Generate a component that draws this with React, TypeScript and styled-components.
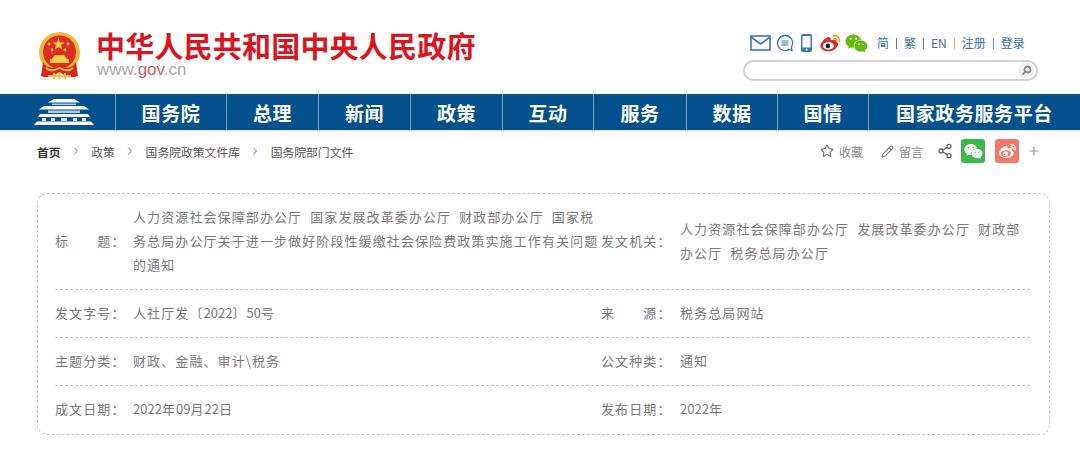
import React from "react";
import styled, { createGlobalStyle } from "styled-components";
import { FaWeibo, FaWeixin } from "react-icons/fa";
import { ChevronRight, Pencil, Plus, Share2, Star } from "lucide-react";

const GlobalStyle = createGlobalStyle`
    html, body {
        margin: 0;
        padding: 0;
        background: #fff;
        font-family: "Noto Sans CJK SC", "Liberation Sans", sans-serif;
    }
`;

const Page = styled.div`
    width: 1080px;
    height: 455px;
    overflow: hidden;
`;

const Header = styled.header`
    height: 94px;
    display: flex;
    justify-content: space-between;
    padding: 0 42px 0 37px;
    box-sizing: border-box;
`;

const Brand = styled.div`
    display: flex;
    gap: 14px;
    padding-top: 32px;
`;

const BrandText = styled.div`
    display: flex;
    flex-direction: column;
    margin-top: -2px;
`;

const SiteTitle = styled.div`
    font-size: 29px;
    line-height: 30px;
    font-weight: 700;
    letter-spacing: 0.2px;
    color: #d8161f;
    white-space: nowrap;
`;

const SiteUrl = styled.div`
    font-family: "Liberation Sans", sans-serif;
    font-size: 17px;
    line-height: 17px;
    margin: 1px 0 0 1px;
    color: #a9a9a9;
    span {
        color: #c0606a;
    }
`;

const HeaderRight = styled.div`
    width: 295px;
    padding-top: 32px;
    display: flex;
    flex-direction: column;
    gap: 6px;
`;

const TopLinks = styled.div`
    display: flex;
    align-items: center;
    height: 22px;
    padding-left: 4px;
`;

const TopIcon = styled.span<{ $w: number; $color?: string }>`
    display: flex;
    align-items: center;
    justify-content: center;
    width: ${(p) => p.$w}px;
    color: ${(p) => p.$color || "#3579b0"};
    flex: none;
`;

const LangLink = styled.span`
    font-size: 12px;
    line-height: 22px;
    color: #36709f;
    white-space: nowrap;
`;

const LangSep = styled.span<{ $color: string }>`
    width: 1px;
    height: 11px;
    margin: 0 7px;
    background: ${(p) => p.$color};
`;

const SearchBox = styled.div`
    height: 21px;
    box-sizing: border-box;
    border: 2px solid #d2d2d2;
    border-radius: 11px;
    display: flex;
    align-items: center;
    justify-content: flex-end;
    padding-right: 1px;
`;

const SearchButton = styled.span`
    width: 17px;
    height: 17px;
    border-radius: 50%;
    background: #f3f3f3;
    display: flex;
    align-items: center;
    justify-content: center;
`;

const Nav = styled.nav`
    height: 36px;
    display: flex;
    background: #04518d;
`;

const NavRule = styled.div`
    height: 1px;
    background: #d3e3f0;
`;

const NavItem = styled.div<{ $w: number }>`
    width: ${(p) => p.$w}px;
    flex: none;
    box-sizing: border-box;
    border-right: 1px solid #7ea5c4;
    display: flex;
    align-items: center;
    justify-content: center;
    color: #fff;
    font-size: 19px;
    font-weight: 700;
    letter-spacing: 0.6px;
    white-space: nowrap;
    &:last-child {
        border-right: none;
        flex: 1;
    }
`;

const GateCell = styled(NavItem)`
    padding-left: 12px;
`;

const ToolBar = styled.div`
    height: 42px;
    box-sizing: border-box;
    padding: 0 39px 2px 37px;
    display: flex;
    align-items: center;
    justify-content: space-between;
`;

const Crumbs = styled.div`
    display: flex;
    align-items: center;
    font-size: 11.8px;
    color: #555;
    white-space: nowrap;
`;

const Crumb = styled.span<{ $strong?: boolean }>`
    font-weight: ${(p) => (p.$strong ? 700 : 400)};
    color: ${(p) => (p.$strong ? "#333" : "#555")};
`;

const CrumbArrow = styled.span`
    display: flex;
    justify-content: center;
    width: 30.7px;
    color: #777;
`;

const Actions = styled.div`
    display: flex;
    align-items: center;
`;

const ActionLink = styled.span<{ $gap: number }>`
    display: flex;
    align-items: center;
    gap: 5px;
    font-size: 12px;
    color: #888;
    margin-right: ${(p) => p.$gap}px;
    white-space: nowrap;
`;

const ShareTile = styled.span<{ $bg: string; $ml: number }>`
    width: 24px;
    height: 24px;
    border-radius: 3px;
    background: ${(p) => p.$bg};
    color: #fff;
    display: flex;
    align-items: center;
    justify-content: center;
    margin-left: ${(p) => p.$ml}px;
`;

const MoreIcon = styled(Plus)`
    margin-left: 8px;
`;

const InfoCard = styled.section`
    margin: 20px 30px 0 37px;
    height: 242px;
    box-sizing: border-box;
    border: 1px dashed #c4c4c4;
    border-radius: 10px;
    padding: 0 19px 0 17px;
`;

const InfoRow = styled.div<{ $h: number }>`
    height: ${(p) => p.$h}px;
    box-sizing: border-box;
    padding-bottom: 2px;
    display: grid;
    grid-template-columns: 78px 468px 79px 1fr;
    align-items: center;
    border-bottom: 1px dashed #c4c4c4;
    font-size: 13px;
    line-height: 24px;
    letter-spacing: 1.1px;
    word-spacing: 4px;
    color: #7a7a7a;
    &:last-child {
        border-bottom: none;
    }
`;

const InfoLabel = styled.div`
    white-space: nowrap;
`;

const InfoValue = styled.div``;

const Num = styled.span`
    letter-spacing: 0;
`;

const Emblem = () => (
    <svg width="45" height="48" viewBox="0 0 45 48">
        <circle cx="22.5" cy="20.5" r="20.5" fill="#f0b83c" />
        <circle cx="22.5" cy="20" r="16.5" fill="#dc2d1e" />
        <polygon points="21.5,6 23,10.5 27.5,10.5 24,13.2 25.3,17.5 21.5,15 17.8,17.5 19,13.2 15.5,10.5 20,10.5" fill="#f8cf45" />
        <circle cx="12" cy="12" r="1.4" fill="#f8cf45" />
        <circle cx="31" cy="12" r="1.4" fill="#f8cf45" />
        <circle cx="15" cy="18" r="1.4" fill="#f8cf45" />
        <circle cx="28" cy="18" r="1.4" fill="#f8cf45" />
        <path d="M15 27 L18 23 H27 L30 27 H32 V31 H13 V27 Z" fill="#f8cf45" />
        <path d="M6 30 C9 36 15 37 22.5 34 C30 37 36 36 39 30 L41 44 C34 47 28 44 22.5 40 C17 44 11 47 4 44 Z" fill="#d9261c" />
        <path d="M9 36 C14 40 18 38 22.5 36 C27 38 31 40 36 36" fill="none" stroke="#f4c23f" strokeWidth="2" />
        <path d="M11 44 H34 M17 41 V47 M28 41 V47 M22.5 40 V47" stroke="#f4c23f" strokeWidth="2" fill="none" />
    </svg>
);

const Gate = () => (
    <svg width="60" height="26" viewBox="0 0 60 26" fill="#fff">
        <path d="M20 0 H40 L46 3.5 H14 Z" />
        <path d="M18 4.5 H42 V6 H18 Z" opacity="0.75" />
        <path d="M10 7 H50 L55 10.5 H5 Z" />
        <path d="M14 11.5 H46 V14 H14 Z" opacity="0.7" />
        <path d="M6 15 H54 L56 18 H4 Z" />
        <path d="M8 19 H12 V22 H8 Z M17 19 H21 V22 H17 Z M27 19 H33 V22 H27 Z M39 19 H43 V22 H39 Z M48 19 H52 V22 H48 Z" opacity="0.85" />
        <path d="M3 22.5 H57 L60 26 H0 Z" />
    </svg>
);

const ColorWeibo = ({ size }: { size: number }) => (
    <svg width={size} height={size * 0.8} viewBox="0 0 25 20">
        <path d="M9.5 19.5 C4.5 19.5 0.5 17 0.5 13.5 C0.5 10 5.5 4.5 9.5 3.5 C12 3 12.5 5 12 7 C15 6 18.5 6 18.5 9 C21 10 21 11.5 20 13.5 C18.5 17 14.5 19.5 9.5 19.5 Z" fill="#d92b24" />
        <ellipse cx="9.5" cy="13.5" rx="6.2" ry="4.4" fill="#fff" />
        <circle cx="9" cy="13.5" r="2.6" fill="#222" />
        <path d="M15.5 2 C19.5 1 23 4.5 22 8.5 M16 5 C18 4.6 19.6 6.2 19.2 8" fill="none" stroke="#ef9a2d" strokeWidth="1.8" strokeLinecap="round" />
    </svg>
);

const navItems = [
    { label: "国务院", w: 111 },
    { label: "总理", w: 92 },
    { label: "新闻", w: 92 },
    { label: "政策", w: 92 },
    { label: "互动", w: 91 },
    { label: "服务", w: 93 },
    { label: "数据", w: 91 },
    { label: "国情", w: 91 },
    { label: "国家政务服务平台", w: 212 },
];

const langLinks = [
    { label: "简", sep: "#5a70b5" },
    { label: "繁", sep: "#8a63b8" },
    { label: "EN", sep: "#e0a84f" },
    { label: "注册", sep: "#5a9ccf" },
    { label: "登录" },
];

const App = () => {
    return (
        <Page>
            <GlobalStyle />
            <Header>
                <Brand>
                    <Emblem />
                    <BrandText>
                        <SiteTitle>中华人民共和国中央人民政府</SiteTitle>
                        <SiteUrl>
                            www.<span>gov</span>.cn
                        </SiteUrl>
                    </BrandText>
                </Brand>
                <HeaderRight>
                    <TopLinks>
                        <TopIcon $w={26}>
                            <svg width="21" height="16" viewBox="0 0 21 16" fill="none" stroke="currentColor" strokeWidth="1.6">
                                <rect x="1" y="1" width="19" height="14" />
                                <path d="M1 2 L10.5 9 L20 2" />
                            </svg>
                        </TopIcon>
                        <TopIcon $w={23}>
                            <svg width="18" height="18" viewBox="0 0 18 18" fill="none" stroke="currentColor">
                                <path d="M9 1.5 A7.5 7.5 0 1 0 13 15.4 L16 16.5 L15.3 13.2 A7.5 7.5 0 0 0 9 1.5 Z" strokeWidth="1.3" />
                                <path d="M5.5 7 H12.5 M5.5 9 H12.5 M5.5 11 H12.5" />
                            </svg>
                        </TopIcon>
                        <TopIcon $w={21}>
                            <svg width="11" height="18" viewBox="0 0 11 18">
                                <rect x="0" y="0" width="11" height="18" rx="2" fill="currentColor" />
                                <rect x="1.5" y="2" width="8" height="11.5" fill="#fff" />
                                <circle cx="5.5" cy="15.7" r="1" fill="#fff" />
                            </svg>
                        </TopIcon>
                        <TopIcon $w={27}>
                            <ColorWeibo size={22} />
                        </TopIcon>
                        <TopIcon $w={24} $color="#66b80f">
                            <FaWeixin size={23} />
                        </TopIcon>
                        <TopIcon $w={9} />
                        {langLinks.map((link) => (
                            <React.Fragment key={link.label}>
                                <LangLink>{link.label}</LangLink>
                                {link.sep && <LangSep $color={link.sep} />}
                            </React.Fragment>
                        ))}
                    </TopLinks>
                    <SearchBox>
                        <SearchButton>
                            <svg width="11" height="11" viewBox="0 0 11 11" fill="none" stroke="#8a8a8a" strokeWidth="1.8">
                                <circle cx="6.5" cy="4.5" r="3" />
                                <path d="M4.3 6.8 L1.5 9.5" />
                            </svg>
                        </SearchButton>
                    </SearchBox>
                </HeaderRight>
            </Header>

            <Nav>
                <GateCell $w={116}>
                    <Gate />
                </GateCell>
                {navItems.map((item) => (
                    <NavItem key={item.label} $w={item.w}>
                        {item.label}
                    </NavItem>
                ))}
            </Nav>
            <NavRule />

            <ToolBar>
                <Crumbs>
                    <Crumb $strong>首页</Crumb>
                    <CrumbArrow>
                        <ChevronRight size={12} />
                    </CrumbArrow>
                    <Crumb>政策</Crumb>
                    <CrumbArrow>
                        <ChevronRight size={12} />
                    </CrumbArrow>
                    <Crumb>国务院政策文件库</Crumb>
                    <CrumbArrow>
                        <ChevronRight size={12} />
                    </CrumbArrow>
                    <Crumb>国务院部门文件</Crumb>
                </Crumbs>
                <Actions>
                    <ActionLink $gap={18}>
                        <Star size={14} color="#777" />
                        收藏
                    </ActionLink>
                    <ActionLink $gap={14}>
                        <Pencil size={13} color="#777" />
                        留言
                    </ActionLink>
                    <Share2 size={16} color="#666" />
                    <ShareTile $bg="#3cb94a" $ml={8}>
                        <FaWeixin size={19} />
                    </ShareTile>
                    <ShareTile $bg="#f5786a" $ml={10}>
                        <FaWeibo size={17} />
                    </ShareTile>
                    <MoreIcon size={14} color="#999" />
                </Actions>
            </ToolBar>

            <InfoCard>
                <InfoRow $h={96}>
                    <InfoLabel>标　　题：</InfoLabel>
                    <InfoValue>
                        人力资源社会保障部办公厅 国家发展改革委办公厅 财政部办公厅 国家税务总局办公厅关于进一步做好阶段性缓缴社会保险费政策实施工作有关问题的通知
                    </InfoValue>
                    <InfoLabel>发文机关：</InfoLabel>
                    <InfoValue>人力资源社会保障部办公厅 发展改革委办公厅 财政部办公厅 税务总局办公厅</InfoValue>
                </InfoRow>
                <InfoRow $h={48}>
                    <InfoLabel>发文字号：</InfoLabel>
                    <InfoValue>
                        人社厅发〔<Num>2022</Num>〕<Num>50</Num>号
                    </InfoValue>
                    <InfoLabel>来　　源：</InfoLabel>
                    <InfoValue>税务总局网站</InfoValue>
                </InfoRow>
                <InfoRow $h={48}>
                    <InfoLabel>主题分类：</InfoLabel>
                    <InfoValue>财政、金融、审计\税务</InfoValue>
                    <InfoLabel>公文种类：</InfoLabel>
                    <InfoValue>通知</InfoValue>
                </InfoRow>
                <InfoRow $h={48}>
                    <InfoLabel>成文日期：</InfoLabel>
                    <InfoValue>
                        <Num>2022</Num>年<Num>09</Num>月<Num>22</Num>日
                    </InfoValue>
                    <InfoLabel>发布日期：</InfoLabel>
                    <InfoValue>
                        <Num>2022</Num>年
                    </InfoValue>
                </InfoRow>
            </InfoCard>
        </Page>
    );
};

export default App;
